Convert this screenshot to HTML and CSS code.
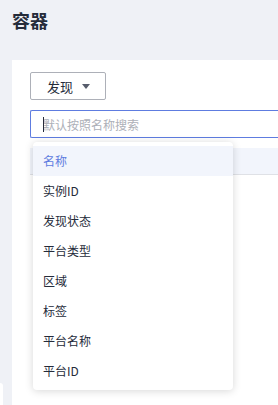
FILE: index.html
```html
<!DOCTYPE html>
<html lang="zh-CN">
<head>
  <meta charset="UTF-8" />
  <meta name="viewport" content="width=device-width, initial-scale=1.0"/>
  <title>容器</title>
  <link rel="stylesheet" href="styles.css">
</head>
<body>
  <div class="page-title">容器</div>

  <div class="panel">
    <button class="select-btn">
      <span>发现</span>
      <span class="caret"></span>
    </button>

    <div class="search-box">
      <span class="cursor"></span>
      <input class="search-input" type="text" placeholder="默认按照名称搜索" />
    </div>

    <div class="table-head"></div>

    <!-- 下拉菜单 -->
    <ul class="dropdown">
      <li class="dropdown-item active">名称</li>
      <li class="dropdown-item">实例ID</li>
      <li class="dropdown-item">发现状态</li>
      <li class="dropdown-item">平台类型</li>
      <li class="dropdown-item">区域</li>
      <li class="dropdown-item">标签</li>
      <li class="dropdown-item">平台名称</li>
      <li class="dropdown-item">平台ID</li>
    </ul>
  </div>

  <div class="side-tab"></div>
</body>
</html>
```

FILE: styles.css
```css
html, body {
  height: 100%;
}

body {
  margin: 0;
  font-family: "Noto Sans CJK SC", "Noto Sans", sans-serif;
  background-color: #eff1f6;
  color: #252b3a;
  display: flex;
  flex-direction: column;
  overflow: hidden;
  position: relative;
}

.page-title {
  font-size: 18px;
  line-height: 24px;
  font-weight: bold;
  padding: 8px 12px 0;
  height: 60px;
  flex-shrink: 0;
  box-sizing: border-box;
}

.panel {
  flex: 1;
  margin-left: 12px;
  background-color: #fff;
  padding: 12px 0 0 18px;
  position: relative;
}

.select-btn {
  display: flex;
  align-items: center;
  justify-content: center;
  gap: 9px;
  width: 76px;
  height: 28px;
  padding: 0 0 0 1px;
  font-family: inherit;
  font-size: 13px;
  color: #252b3a;
  background-color: #fff;
  border: 1px solid #adb0b8;
  border-radius: 2px;
}

.caret {
  width: 0;
  height: 0;
  border-left: 4px solid transparent;
  border-right: 4px solid transparent;
  border-top: 5px solid #575d6c;
  margin-top: 1px;
}

.search-box {
  position: relative;
  margin-top: 10px;
}

.search-input {
  display: block;
  width: 100%;
  height: 28px;
  box-sizing: border-box;
  padding: 0 12px;
  font-family: inherit;
  font-size: 12px;
  color: #252b3a;
  border: 1px solid #5e7ce0;
  border-right: none;
  border-radius: 2px 0 0 2px;
  outline: none;
}

.search-input::placeholder {
  color: #adb0b8;
}

.cursor {
  position: absolute;
  left: 13px;
  top: 7px;
  width: 1px;
  height: 15px;
  background-color: #252b3a;
}

.table-head {
  margin-top: 10px;
  height: 26px;
  background-color: #f2f5fc;
  border-bottom: 1px solid #dfe1e6;
}

.dropdown {
  position: absolute;
  top: 82px;
  left: 21px;
  width: 200px;
  margin: 0;
  padding: 4px 0;
  list-style: none;
  background-color: #fff;
  border-radius: 4px;
  box-shadow: 0 1px 8px rgba(0, 0, 0, 0.16);
}

.dropdown-item {
  height: 30px;
  line-height: 30px;
  padding-left: 10px;
  font-size: 12px;
  color: #252b3a;
}

.dropdown-item.active {
  color: #5e7ce0;
  background-color: #f2f5fc;
}

.side-tab {
  position: absolute;
  left: 0;
  bottom: 0;
  width: 3px;
  height: 22px;
  background-color: #fff;
  border-top-right-radius: 4px;
}
```
